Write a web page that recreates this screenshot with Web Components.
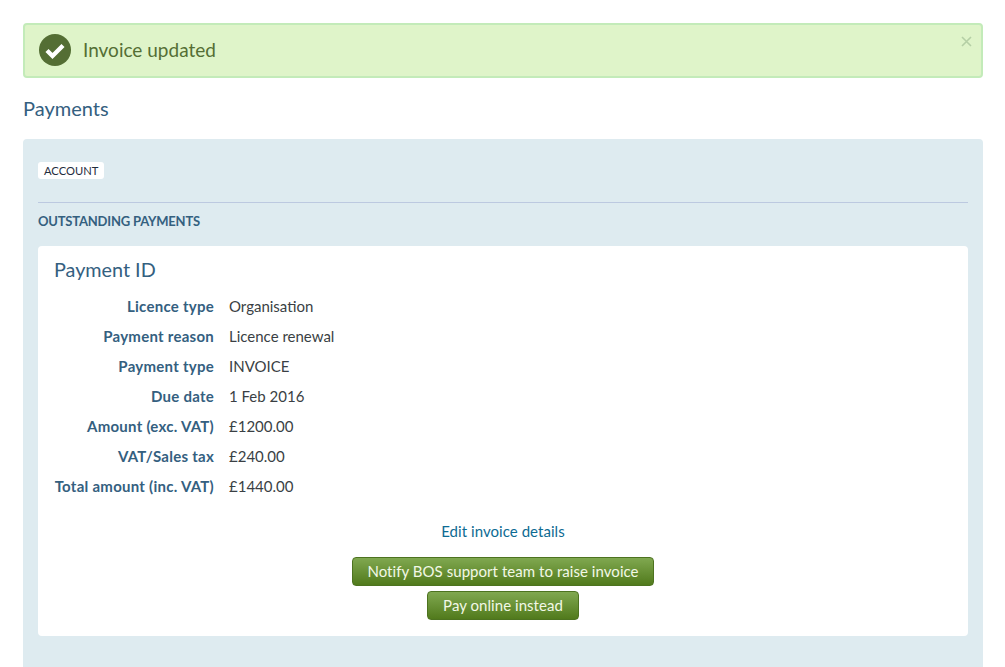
<!DOCTYPE html>
<html lang="en">
<head>
<meta charset="utf-8">
<title>Payments</title>
<style>
  html, body { margin: 0; background: #fff; overflow: hidden; }
  body { font-family: Lato, "Open Sans", sans-serif; color: #333; }
  .page { padding: 23px 22px 0 23px; }
</style>
</head>
<body>
<div class="page">
  <alert-box>Invoice updated</alert-box>
  <page-title>Payments</page-title>
  <payments-panel badge="ACCOUNT" heading="OUTSTANDING PAYMENTS">
    <payment-card heading="Payment ID">
      <detail-row label="Licence type">Organisation</detail-row>
      <detail-row label="Payment reason">Licence renewal</detail-row>
      <detail-row label="Payment type">INVOICE</detail-row>
      <detail-row label="Due date">1 Feb 2016</detail-row>
      <detail-row label="Amount (exc. VAT)">£1200.00</detail-row>
      <detail-row label="VAT/Sales tax">£240.00</detail-row>
      <detail-row label="Total amount (inc. VAT)">£1440.00</detail-row>
      <a slot="link" href="#" style="color:#0d6b93;text-decoration:none">Edit invoice details</a>
      <green-button slot="actions" style="--btn-pad:14.7px">Notify BOS support team to raise invoice</green-button>
      <green-button slot="actions" style="--btn-pad:15.4px">Pay online instead</green-button>
    </payment-card>
  </payments-panel>
</div>
<script>
class AlertBox extends HTMLElement {
  constructor() {
    super();
    this.attachShadow({ mode: 'open' });
  }
  connectedCallback() {
    this.shadowRoot.innerHTML = `
      <style>
        :host {
          display: flex;
          align-items: center;
          gap: 12px;
          height: 55px;
          box-sizing: border-box;
          padding: 0 14px;
          background: #dff4c9;
          border: 2px solid #c3ebb9;
          border-radius: 4px;
          color: #546e34;
          font-size: 19px;
          position: relative;
        }
        svg { width: 32px; height: 32px; flex-shrink: 0; margin-bottom: 1px; }
        .text { margin-bottom: 3px; }
        .close {
          position: absolute;
          top: 11px;
          right: 9px;
          width: 11px;
          height: 11px;
        }
      </style>
      <svg viewBox="0 0 32 32">
        <circle cx="16" cy="16" r="16" fill="#546e34"/>
        <path d="M8 16.5 L13.5 22 L24 11.5" fill="none" stroke="#fff" stroke-width="4.4"/>
      </svg>
      <div class="text"><slot></slot></div>
      <svg class="close" viewBox="0 0 11 11">
        <path d="M1 1 L10 10 M10 1 L1 10" stroke="#b5cfa5" stroke-width="1.6" fill="none"/>
      </svg>
    `;
  }
}
customElements.define('alert-box', AlertBox);

class PageTitle extends HTMLElement {
  constructor() {
    super();
    this.attachShadow({ mode: 'open' });
  }
  connectedCallback() {
    this.shadowRoot.innerHTML = `
      <style>
        :host {
          display: block;
          margin: 18px 0 19px;
          font-size: 20px;
          line-height: 24px;
          color: #34607f;
        }
      </style>
      <slot></slot>
    `;
  }
}
customElements.define('page-title', PageTitle);

class PaymentsPanel extends HTMLElement {
  constructor() {
    super();
    this.attachShadow({ mode: 'open' });
  }
  connectedCallback() {
    const badge = this.getAttribute('badge') || '';
    const heading = this.getAttribute('heading') || '';
    this.shadowRoot.innerHTML = `
      <style>
        :host {
          display: block;
          background: #deebf0;
          border-radius: 4px 4px 0 0;
          padding: 23px 15px 60px;
        }
        .badge {
          display: inline-block;
          background: #fff;
          border-radius: 3px;
          padding: 0 6px;
          height: 17px;
          line-height: 17px;
          font-size: 11.2px;
          color: #1f2d3d;
          vertical-align: top;
        }
        .top { height: 17px; }
        .rule { height: 1px; background: #bcc9e0; margin: 23px 0 10px; }
        .heading {
          font-size: 13px;
          line-height: 16px;
          font-weight: 700;
          letter-spacing: -0.2px;
          color: #34607f;
          margin-bottom: 17px;
        }
      </style>
      <div class="top"><span class="badge">${badge}</span></div>
      <div class="rule"></div>
      <div class="heading">${heading}</div>
      <slot></slot>
    `;
  }
}
customElements.define('payments-panel', PaymentsPanel);

class PaymentCard extends HTMLElement {
  constructor() {
    super();
    this.attachShadow({ mode: 'open' });
  }
  connectedCallback() {
    const heading = this.getAttribute('heading') || '';
    this.shadowRoot.innerHTML = `
      <style>
        :host {
          display: block;
          background: #fff;
          border-radius: 4px;
          padding: 12px 16px 16px;
          height: 390px;
          box-sizing: border-box;
        }
        h2 {
          margin: -1px 0 10px;
          font-size: 19.8px;
          font-weight: 400;
          line-height: 24px;
          color: #34607f;
        }
        .link {
          text-align: center;
          font-size: 15px;
          line-height: 30px;
          letter-spacing: 0.05px;
          margin: 15px 0 11px;
        }
        .actions {
          display: flex;
          flex-direction: column;
          align-items: center;
          gap: 5px;
        }
      </style>
      <h2>${heading}</h2>
      <slot></slot>
      <div class="link"><slot name="link"></slot></div>
      <div class="actions"><slot name="actions"></slot></div>
    `;
  }
}
customElements.define('payment-card', PaymentCard);

class DetailRow extends HTMLElement {
  constructor() {
    super();
    this.attachShadow({ mode: 'open' });
  }
  connectedCallback() {
    const label = this.getAttribute('label') || '';
    this.shadowRoot.innerHTML = `
      <style>
        :host {
          display: grid;
          grid-template-columns: 160px 1fr;
          column-gap: 15px;
          font-size: 15px;
          line-height: 30px;
          color: #3a3f44;
        }
        .label {
          text-align: right;
          font-weight: 700;
          letter-spacing: 0.26px;
          color: #34607f;
          white-space: nowrap;
        }
      </style>
      <div class="label">${label}</div>
      <div><slot></slot></div>
    `;
  }
}
customElements.define('detail-row', DetailRow);

class GreenButton extends HTMLElement {
  constructor() {
    super();
    this.attachShadow({ mode: 'open' });
  }
  connectedCallback() {
    this.shadowRoot.innerHTML = `
      <style>
        :host {
          display: block;
          box-sizing: border-box;
          height: 29px;
          padding: 0 var(--btn-pad, 15px);
          line-height: 27px;
          font-size: 15px;
          letter-spacing: 0.05px;
          color: #f2f8e6;
          background: linear-gradient(#80a850, #517a1c);
          border: 1px solid #4d7320;
          border-radius: 4px;
          white-space: nowrap;
        }
      </style>
      <slot></slot>
    `;
  }
}
customElements.define('green-button', GreenButton);
</script>
</body>
</html>
